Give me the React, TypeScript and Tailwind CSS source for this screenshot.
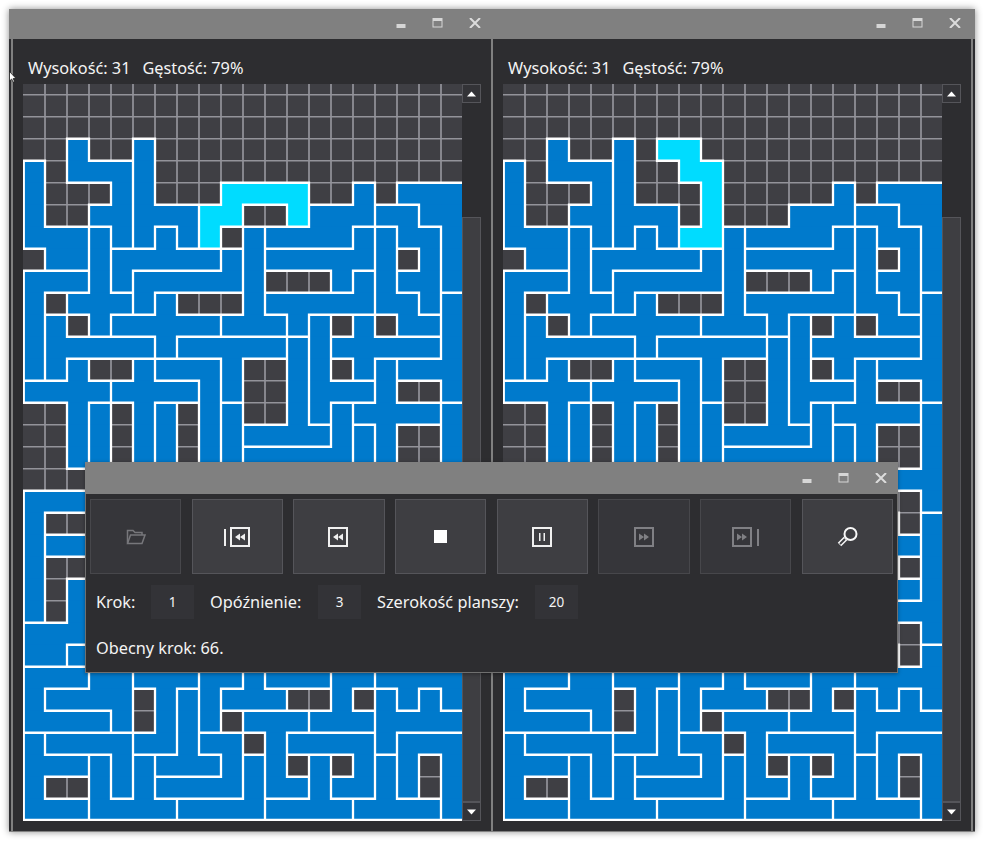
const BOARD = [
  "....................",
  "....................",
  "....................",
  "..A..D..............",
  "B.AAAD..............",
  "B...AD.........N.QQQ",
  "B..AADDD.....NNNOOQQ",
  "BBBCADED..KNNNNMROOQ",
  ".BBCEEEEEFKMMMMMR.OQ",
  "GGGCEFFFFFK...MLROOQ",
  "G.CCCFJ...KLLLLLRROh",
  "GH.CJJJJJKKKLZ.Y.RRh",
  "GHHHHHJSSSSSdZYYYYYh",
  "GHV..UTTTS..dZ.Yfhhh",
  "VVVVUUUUTS..dZZZf..h",
  "..Va.Ub.Tc..dZeffffi",
  "..Va.Ub.Tcddddegf..i",
  "..Va.Ub.Tceeeeegf..i",
  "...xxxxxxxxxxxxxxiii",
  "jjjxxxxxxxxxxxxxx..i",
  "j..xxxxxxxxxxxxxxm.p",
  "jkkxxxxxxxxxxxxxxqqp",
  "j..xxxxxxxxxxxxxxm.p",
  "j.lxxxxxxxxxxxxxxrrp",
  "j.lxxxxxxxxxxxxxxppp",
  "lllxxxxxxxxxxxxxx..p",
  "llmxxxxxxxxxxxxxxs.t",
  "nnnuuvvvwwyzzz00tttt",
  "nuuuu.v1wyyy..0.2t2t",
  "nnnnu.v1w.3330002222",
  "45555vv166.377772888",
  "4449591116W3.I.7X8.8",
  "4..9596666W33I77X8.8",
  "4449999WWWWIIIIXXXX8",
];

const CELL = 22;
const TOP = -11.25;

function Board({ falling }: { falling: [number, number][] }) {
  const at = (r: number, c: number) => {
    if (falling.some(([fr, fc]) => fr === r && fc === c)) return "#";
    return BOARD[r][c];
  };

  const rects = [];
  let white = "";
  let gray = "";

  for (let r = 0; r < BOARD.length; r++) {
    const y = TOP + r * CELL;
    for (let c = 0; c < 20; c++) {
      const x = c * CELL;
      const id = at(r, c);
      if (id !== ".") {
        rects.push(
          <rect key={`${r}-${c}`} x={x} y={y} width={CELL + 0.5} height={CELL + 0.5} fill={id === "#" ? "#00dcff" : "#007acc"} />
        );
      }
      if (c > 0 && at(r, c - 1) !== id) white += `M${x} ${y}v${CELL}`;
      else if (c > 0 && id === ".") gray += `M${x} ${y}v${CELL}`;
      if (r > 0 && at(r - 1, c) !== id) white += `M${x} ${y}h${CELL}`;
      else if (r > 0 && id === ".") gray += `M${x} ${y}h${CELL}`;
      if (c === 0 && id !== ".") white += `M0.75 ${y}v${CELL}`;
      if (r === BOARD.length - 1) white += `M${x} ${y + CELL - 0.75}h${CELL}`;
    }
  }

  return (
    <svg width="439" height="737" viewBox="0 0 439 737" className="block shrink-0">
      <rect width="439" height="737" fill="#3f3f44" />
      {rects}
      <path d={gray} stroke="#93939a" strokeWidth="1.7" fill="none" />
      <path d={white} stroke="#ffffff" strokeWidth="2.3" strokeLinecap="square" fill="none" />
    </svg>
  );
}

function WindowControls() {
  return (
    <div className="flex">
      <div className="flex w-[37px] justify-center">
        <svg width="14" height="10" viewBox="0 0 14 10">
          <rect x="2.5" y="6" width="9" height="4" fill="#d6d6d6" />
        </svg>
      </div>
      <div className="flex w-[37px] justify-center">
        <svg width="14" height="10" viewBox="0 0 14 10">
          <path d="M1.5 0h10v9.5h-10z M2.5 3v5.5h8V3z" fill="#d6d6d6" fillRule="evenodd" />
        </svg>
      </div>
      <div className="flex w-[37px] justify-center">
        <svg width="14" height="10" viewBox="0 0 14 10">
          <path d="M2 0l10 10M12 0L2 10" stroke="#dcdcdc" strokeWidth="2" />
        </svg>
      </div>
    </div>
  );
}

function Scrollbar() {
  return (
    <div className="flex w-[19px] flex-col">
      <div className="flex h-[19px] items-center justify-center border border-[#55555a] bg-[#333337]">
        <svg width="9" height="6" viewBox="0 0 9 6">
          <path d="M4.5 0.5L9 5.5H0z" fill="#ffffff" />
        </svg>
      </div>
      <div className="h-[114px]" />
      <div className="flex-1 border border-[#55555a] bg-[#3e3e42]" />
      <div className="flex h-[19px] items-center justify-center border border-[#55555a] bg-[#333337]">
        <svg width="9" height="6" viewBox="0 0 9 6">
          <path d="M4.5 5.5L9 0.5H0z" fill="#ffffff" />
        </svg>
      </div>
    </div>
  );
}

function BoardWindow({ falling, className }: { falling: [number, number][]; className: string }) {
  return (
    <div className={`flex h-full w-[486px] flex-col bg-[#2d2d30] border-b border-[#808080] ${className}`}>
      <div className="flex h-[30px] shrink-0 items-start justify-end bg-[#808080] pr-[2px] pt-[9px]">
        <WindowControls />
      </div>
      <div className="mx-[2px] flex flex-1 flex-col border-x-2 border-[#808080] pl-[10px]">
        <div className="flex h-[45px] items-end gap-[12px] pl-[5px] pb-[4px] text-[16.3px] text-[#f4f4f4]">
          <span>Wysokość: 31</span>
          <span>Gęstość: 79%</span>
        </div>
        <div className="flex h-[737px]">
          <Board falling={falling} />
          <Scrollbar />
        </div>
      </div>
    </div>
  );
}

function BoxIcon({ kind, bar, color }: { kind: "rew" | "ff" | "pause"; bar?: "left" | "right"; color: string }) {
  const boxX = bar === "left" ? 7 : 1;
  const width = bar ? 27 : 21;
  return (
    <svg width={width} height="20" viewBox={`0 0 ${width} 20`}>
      {bar === "left" && <rect x="0" y="2" width="2" height="17" fill={color} />}
      {bar === "right" && <rect x="25" y="2" width="2" height="17" fill={color} />}
      <rect x={boxX} y="1" width="18" height="18" fill="none" stroke={color} strokeWidth="2" />
      <g transform={`translate(${boxX} 0)`} fill={color}>
        {kind === "rew" && <path d="M4 10l5-3.5v7zM9 10l5-3.5v7z" />}
        {kind === "ff" && <path d="M14 10l-5-3.5v7zM9 10l-5-3.5v7z" />}
        {kind === "pause" && <path d="M6 6h1.5v8H6zM10.5 6h1.5v8h-1.5z" />}
      </g>
    </svg>
  );
}

function ToolButton({ enabled, children }: { enabled: boolean; children: React.ReactNode }) {
  return (
    <div
      className={`flex h-[75px] items-center justify-center border ${
        enabled ? "border-[#55555a] bg-[#3e3e42]" : "border-[#47474b] bg-[#36363a]"
      }`}
    >
      {children}
    </div>
  );
}

function NumberBox({ value }: { value: string }) {
  return (
    <input
      readOnly
      value={value}
      className="h-[34px] w-[43px] bg-[#333337] text-center text-[13.5px] text-[#f4f4f4] outline-none"
    />
  );
}

function ControlWindow() {
  return (
    <div className="absolute left-[76px] top-[453px] h-[211px] w-[813px] border border-t-0 border-[#6f6f6f] bg-[#2d2d30] shadow-[0_1px_4px_rgba(0,0,0,0.35)]">
      <div className="-mx-px flex h-[32px] items-center justify-end bg-[#808080]">
        <div className="-mr-px">
          <WindowControls />
        </div>
      </div>
      <div className="mt-[5px] grid grid-cols-8 gap-[10.5px] px-[4px]">
        <ToolButton enabled={false}>
          <svg width="20" height="16" viewBox="0 0 20 16" fill="none" stroke="#77777b" strokeWidth="1.5">
            <path d="M1.5 14V1.5h5.5l2 2h7V6" />
            <path d="M1.5 14.5L4.5 6h14.5l-3 8.5z" />
          </svg>
        </ToolButton>
        <ToolButton enabled>
          <BoxIcon kind="rew" bar="left" color="#f0f0f0" />
        </ToolButton>
        <ToolButton enabled>
          <BoxIcon kind="rew" color="#f0f0f0" />
        </ToolButton>
        <ToolButton enabled>
          <div className="h-[13px] w-[13px] bg-white" />
        </ToolButton>
        <ToolButton enabled>
          <BoxIcon kind="pause" color="#f0f0f0" />
        </ToolButton>
        <ToolButton enabled={false}>
          <BoxIcon kind="ff" color="#808084" />
        </ToolButton>
        <ToolButton enabled={false}>
          <BoxIcon kind="ff" bar="right" color="#808084" />
        </ToolButton>
        <ToolButton enabled>
          <svg width="21" height="20" viewBox="0 0 21 20" fill="none">
            <circle cx="13.5" cy="7" r="6" stroke="#f8f8f8" strokeWidth="2" />
            <path d="M8.5 11.5L2.5 17.5" stroke="#f8f8f8" strokeWidth="5" />
            <path d="M8 12L3 17" stroke="#3e3e42" strokeWidth="2" />
          </svg>
        </ToolButton>
      </div>
      <div className="mt-[11px] flex h-[34px] items-center pl-[10px] text-[16.3px] text-[#f4f4f4]">
        <span className="w-[55px]">Krok:</span>
        <NumberBox value="1" />
        <span className="ml-[16px] w-[108px]">Opóźnienie:</span>
        <NumberBox value="3" />
        <span className="ml-[16px] w-[158px]">Szerokość planszy:</span>
        <NumberBox value="20" />
      </div>
      <div className="mt-[17px] pl-[10px] text-[16.3px] text-[#f4f4f4]">Obecny krok: 66.</div>
    </div>
  );
}

export default function App() {
  return (
    <div className="relative h-[841px] w-[983px] overflow-hidden bg-white pl-[9px] pt-[9px] font-['Noto_Sans',sans-serif]">
      <div className="relative flex h-[823px] w-[966px] shadow-[0_0_7px_rgba(0,0,0,0.45)]">
        <BoardWindow
          className=""
          falling={[[5, 9], [5, 10], [5, 11], [5, 12], [6, 8], [6, 9], [6, 12], [7, 8]]}
        />
        <BoardWindow
          className="relative -ml-[6px]"
          falling={[[3, 7], [3, 8], [4, 8], [4, 9], [5, 9], [6, 9], [7, 8], [7, 9]]}
        />
        <ControlWindow />
      </div>
      <svg width="7" height="12" viewBox="0 0 7 12" className="absolute left-[9px] top-[71px]">
        <path d="M0.5 0.5V10l2.2-2 1.4 3.2 1.4-.6L4.2 7.5H7z" fill="#ffffff" stroke="#111111" strokeWidth="0.7" />
      </svg>
    </div>
  );
}
